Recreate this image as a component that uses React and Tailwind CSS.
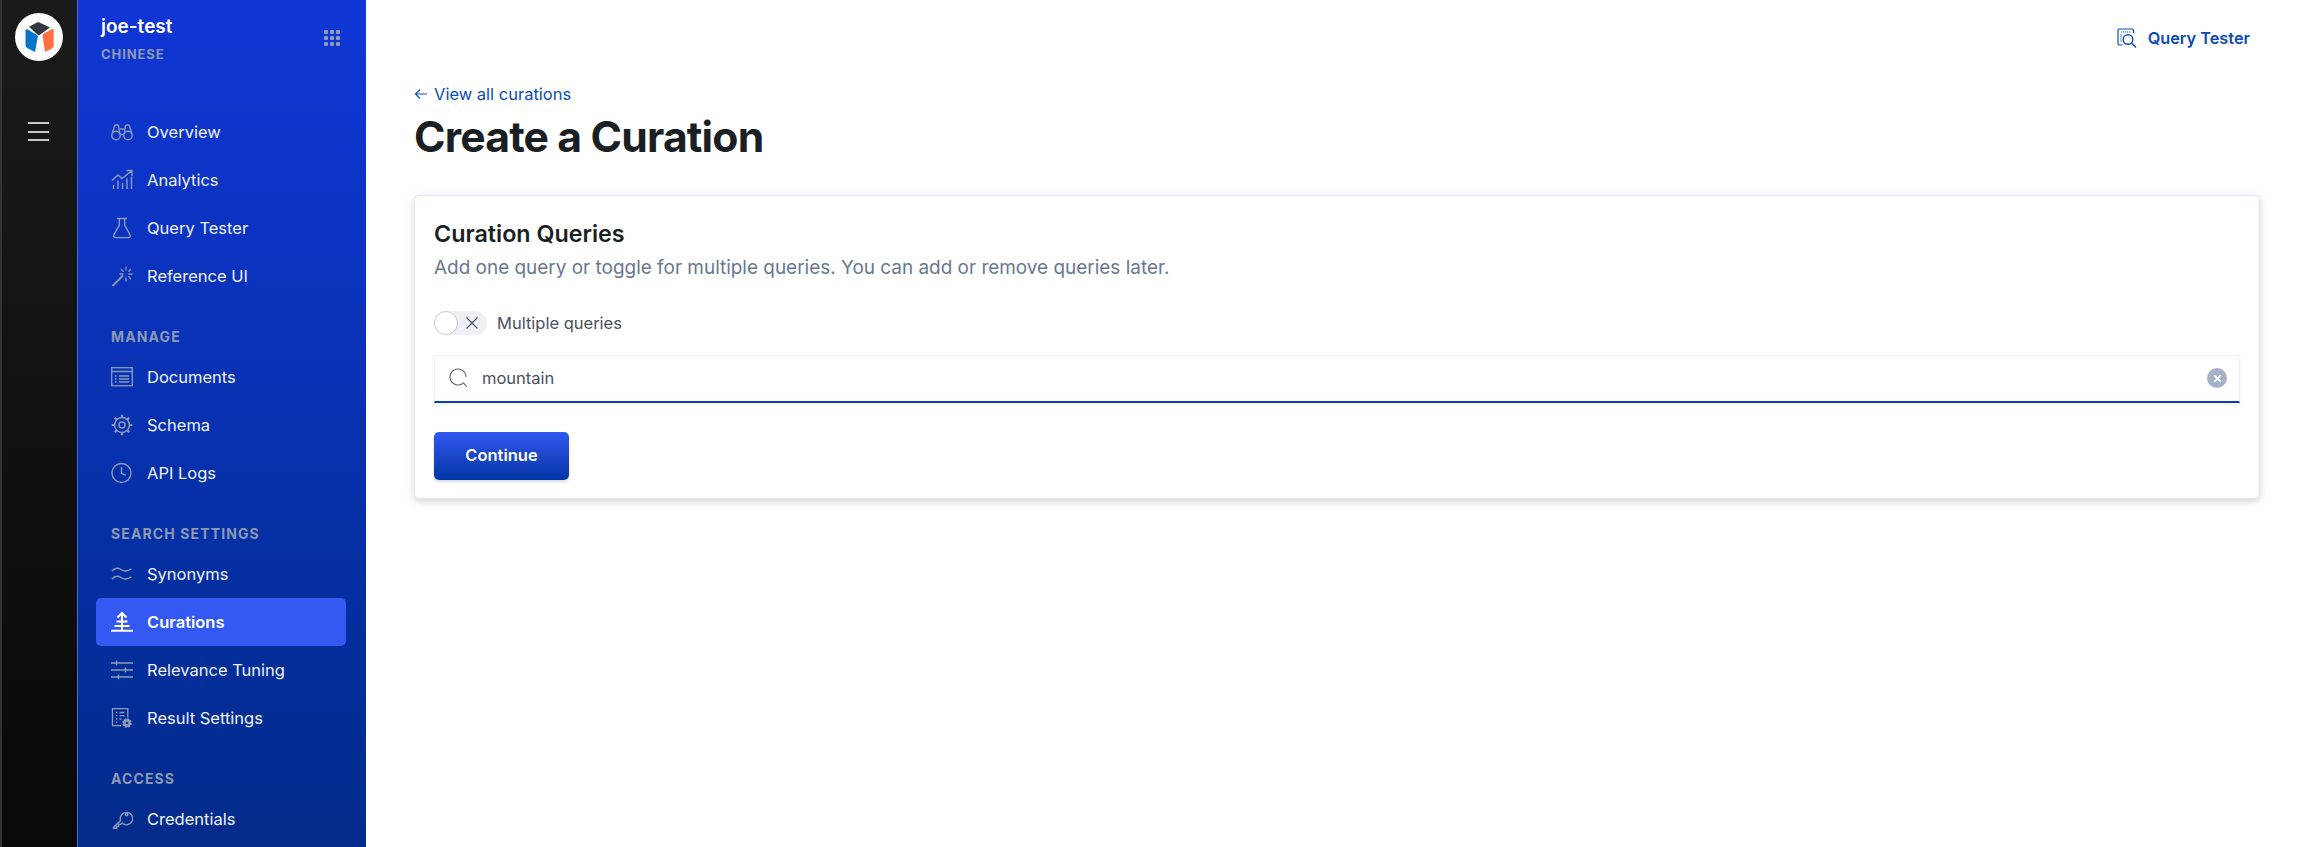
import React from "react";

const iconProps = {
  viewBox: "0 0 22 22",
  fill: "none",
  stroke: "currentColor",
  strokeWidth: 1.2,
  className: "w-[22px] h-[22px]",
};

function Binoculars() {
  return (
    <svg {...iconProps} strokeWidth="1.4">
      <circle cx="5" cy="14.5" r="4.2" />
      <circle cx="17" cy="14.5" r="4.2" />
      <path d="M9.2 14c.8-.9 2.8-.9 3.6 0M1.2 12.5 3.5 5c.3-1.6 3.7-1.6 4 0l1.4 8M20.8 12.5 18.5 5c-.3-1.6-3.7-1.6-4 0l-1.4 8M9 8h4" />
    </svg>
  );
}

function AnalyticsIcon() {
  return (
    <svg {...iconProps} strokeWidth="1.4">
      <path d="M1 11.5 7 6l4 3.5L20.5 2M15.5 1.500h5.500V7M2.500 20v-4M7 20v-8.500M11.500 20v-6M16 20V9.500M20.500 20V7.500" />
    </svg>
  );
}

function Flask() {
  return (
    <svg {...iconProps} strokeWidth="1.4">
      <path d="M6 1.500h10M8.300 1.500v6.800L3 17.600c-.9 1.600 0 3 1.700 3h12.600c1.700 0 2.600-1.400 1.700-3l-5.300-9.300V1.500" />
    </svg>
  );
}

function Wand() {
  return (
    <svg {...iconProps} strokeWidth="1.300">
      <path d="M1.500 21 12 10.500" strokeWidth="1.800" />
      <path d="M15 1.500v4M15 12.500v4M8.500 9h4M17.500 9h4M10 4l2.600 2.600M20 4l-2.600 2.600M20 14l-2.600-2.600" />
    </svg>
  );
}

function DocumentsIcon() {
  return (
    <svg {...iconProps} strokeWidth="1.300">
      <rect x="0.700" y="1.700" width="20.600" height="18" />
      <path d="M.7 5.500h20.600M4 10h1.600M8 10h10M4 13h1.600M8 13h10M4 16h1.600M8 16h10" />
    </svg>
  );
}

function SchemaIcon() {
  return (
    <svg {...iconProps} strokeWidth="1.500">
      <circle cx="11" cy="11" r="7.400" />
      <circle cx="11" cy="11" r="3" />
      <path
        d="M11 .8v2.800M11 18.400v2.800M.8 11h2.800M18.400 11h2.800M3.800 3.800l2 2M16.200 16.200l2 2M18.200 3.800l-2 2M5.800 16.200l-2 2"
        strokeWidth="2.200"
      />
    </svg>
  );
}

function Clock() {
  return (
    <svg {...iconProps} strokeWidth="1.400">
      <circle cx="10.500" cy="11" r="9.500" />
      <path d="M10.500 5v6.300l4.300 2" />
    </svg>
  );
}

function Waves() {
  return (
    <svg {...iconProps} strokeWidth="1.400">
      <path d="M1 8c3-3.500 6-3.500 9-1.500s6 2.500 10.500-.8M1 16c3-3.500 6-3.500 9-1.500s6 2.500 10.500-.8" />
    </svg>
  );
}

function TreeIcon() {
  return (
    <svg {...iconProps} strokeWidth="2">
      <path d="M11 2v17M0 19.800h22M6.500 6.500 11 2l4.500 4.500M5.500 10.500h11M3.500 15h15" />
    </svg>
  );
}

function Sliders() {
  return (
    <svg {...iconProps} strokeWidth="1.300">
      <path d="M0 4h22M0 11h22M0 18h22" />
      <path d="M5.500 1.800v4.400M14.500 8.800v4.400M7.500 15.800v4.400" strokeWidth="1.500" />
    </svg>
  );
}

function ResultIcon() {
  return (
    <svg {...iconProps} strokeWidth="1.300">
      <path d="M10 18.700H1.500V1.700h15.300v9" />
      <path d="M5 5.500h1.300M8.500 5.500h5M5 8.700h1.300M8.500 8.700h5M5 12h1.300M8.500 12h2M5 15.200h1.300" />
      <circle cx="16" cy="16" r="3.900" fill="currentColor" strokeWidth="1.800" strokeDasharray="2 1" />
      <circle cx="16" cy="16" r="1.300" fill="#0a2f97" stroke="none" />
    </svg>
  );
}

function KeyIcon() {
  return (
    <svg {...iconProps} strokeWidth="1.400">
      <path d="M9.600 12.400 2.500 19.400v1h3.200v-2h2v-2h2l1.400-1.500a6.200 6.200 0 1 0-1.500-2.500Z" />
      <circle cx="15.600" cy="6.500" r="1.200" />
    </svg>
  );
}

function GridIcon() {
  const dots = [0, 6, 12];
  return (
    <svg viewBox="0 0 16 16" fill="#8c9ab6" className="w-4 h-4">
      {dots.map((y) =>
        dots.map((x) => <rect key={`${x}-${y}`} x={x} y={y} width="4" height="4" rx="0.800" />)
      )}
    </svg>
  );
}

function Logo() {
  // drawn on the 48px circle itself
  return (
    <svg viewBox="0 0 48 48" className="w-12 h-12">
      <path d="M22 9.500c.8-.5 1.600-.5 2.400 0L35 14.500 24.500 22c-.6.400-1 .4-1.500 0L14 13.700Z" fill="#343741" />
      <path d="M10.500 18c0-1.500 1-2.200 2.300-1.500L22 22c.8.500 1 1 .8 2L20 39l-7-3.500c-1.600-.8-2.500-2-2.500-3.800Z" fill="#0077cc" />
      <path d="M38.700 17.500c0-1.300-.8-1.800-2-1.200l-7.500 4c-1.200.700-1.700 1.800-1.500 3.200L30 39l6-3c1.800-.9 2.700-2 2.700-3.800Z" fill="#ff7044" />
    </svg>
  );
}

function NavItem({ icon: Icon, label, active }) {
  return (
    <a
      className={
        active
          ? "flex items-center h-12 ml-[18px] mr-[20px] px-[15px] gap-[14px] rounded-[5px] bg-[#3458f2] text-white font-semibold"
          : "flex items-center h-12 ml-[18px] mr-[20px] px-[15px] gap-[14px] text-[#eef2fb]"
      }
    >
      <span className={active ? "text-white" : "text-[#8c9ab6]"}>
        <Icon />
      </span>
      <span>{label}</span>
    </a>
  );
}

function SectionLabel({ children }) {
  return (
    <div className="mt-6 mb-[5px] h-6 px-[33px] flex items-center text-[14px] font-bold tracking-[0.08em] text-[#8c9ab6]">
      {children}
    </div>
  );
}

function Sidebar() {
  return (
    <aside className="w-[289px] shrink-0 h-full overflow-hidden border-l border-[#4a6be0] bg-gradient-to-b from-[#1036d6] to-[#022b8a]">
      <div className="flex justify-between pl-[23px] pr-[26px] pt-[15px] h-[108px]">
        <div>
          <div className="text-[19px] leading-6 font-semibold text-white">joe-test</div>
          <div className="mt-[5px] text-[13px] leading-5 font-bold tracking-[0.07em] text-[#8c9ab6]">CHINESE</div>
        </div>
        <div className="pt-[15px]">
          <GridIcon />
        </div>
      </div>
      <nav className="text-[16.500px]">
        <NavItem icon={Binoculars} label="Overview" />
        <NavItem icon={AnalyticsIcon} label="Analytics" />
        <NavItem icon={Flask} label="Query Tester" />
        <NavItem icon={Wand} label="Reference UI" />
        <SectionLabel>MANAGE</SectionLabel>
        <NavItem icon={DocumentsIcon} label="Documents" />
        <NavItem icon={SchemaIcon} label="Schema" />
        <NavItem icon={Clock} label="API Logs" />
        <SectionLabel>SEARCH SETTINGS</SectionLabel>
        <NavItem icon={Waves} label="Synonyms" />
        <NavItem icon={TreeIcon} label="Curations" active />
        <NavItem icon={Sliders} label="Relevance Tuning" />
        <NavItem icon={ResultIcon} label="Result Settings" />
        <SectionLabel>ACCESS</SectionLabel>
        <NavItem icon={KeyIcon} label="Credentials" />
      </nav>
    </aside>
  );
}

function Rail() {
  return (
    <div className="w-[77px] shrink-0 h-full flex flex-col items-center pt-[13px] pr-[2px] border-l-2 border-[#333] bg-gradient-to-b from-[#1a1a1a] to-[#090909]">
      <div className="w-12 h-12 rounded-full bg-white">
        <Logo />
      </div>
      <div className="mt-[61px] w-[21px] flex flex-col gap-[6.500px]">
        <span className="h-[2px] bg-[#c8c8c8]" />
        <span className="h-[2px] bg-[#c8c8c8]" />
        <span className="h-[2px] bg-[#c8c8c8]" />
      </div>
    </div>
  );
}

export default function App() {
  return (
    <div className="flex h-[847px] overflow-hidden bg-white text-[16.500px] font-['Inter',sans-serif]">
      <Rail />
      <Sidebar />
      <main className="flex-1 min-w-0 pl-[48px] pr-[44px]">
        <div className="flex justify-end items-center gap-[11px] pr-[10px] h-[76px]">
          <svg viewBox="0 0 20 20" fill="none" stroke="#0b4cb4" strokeWidth="1.200" className="w-5 h-5">
            <path d="M5.500 17H2.500C1.600 17 1 16.400 1 15.500V2.500C1 1.600 1.600 1 2.500 1H15C15.900 1 16.500 1.600 16.500 2.500V5" />
            <path d="M4 4h10M4 6.500v8" strokeDasharray="1 1" />
            <circle cx="11" cy="11.500" r="4.800" strokeWidth="1.400" />
            <path d="m15 15.500 4 4" strokeWidth="1.400" />
          </svg>
          <span className="text-[16.300px] font-semibold text-[#0b4cb4]">Query Tester</span>
        </div>
        <a className="mt-[6px] h-6 flex items-center gap-[6px] text-[#0b4cb4]">
          <svg viewBox="0 0 14 14" fill="none" stroke="currentColor" strokeWidth="1.200" className="w-[14px] h-[14px]">
            <path d="M13 7H1.500M6 2.500 1.500 7 6 11.500" />
          </svg>
          View all curations
        </a>
        <h1 className="mt-[4px] text-[42.700px] leading-[54px] font-bold tracking-[-0.02em] text-[#1a1f24]">Create a Curation</h1>
        <section className="mt-[31px] h-[304px] rounded-[5px] border border-[#e3e8f0] bg-white px-[19px] pt-[20px] shadow-[0_3px_6px_rgba(152,162,179,0.35),0_0_14px_rgba(152,162,179,0.12)]">
          <h2 className="text-[23.300px] leading-9 font-semibold text-[#1a1f24]">Curation Queries</h2>
          <p className="text-[18.950px] leading-8 text-[#69778f]">
            Add one query or toggle for multiple queries. You can add or remove queries later.
          </p>
          <div className="mt-[27px] flex items-center gap-[10px]">
            <div className="relative w-[53px] h-6 rounded-full bg-[#eef0f4]">
              <div className="absolute left-0 top-0 w-6 h-6 rounded-full bg-white border border-[#c6ccd6]" />
              <svg viewBox="0 0 14 14" fill="none" stroke="#4b5563" strokeWidth="1.100" className="absolute left-[31px] top-[5px] w-[14px] h-[14px]">
                <path d="m1.500 1.500 11 11M12.500 1.500l-11 11" />
              </svg>
            </div>
            <span className="text-[#4a515e]">Multiple queries</span>
          </div>
          <div className="mt-[19px] h-12 flex items-center border border-[#eff0f5] border-b-2 border-b-[#0b3ea8] pl-[14px] pr-[12px] shadow-[0_2px_3px_rgba(152,162,179,0.15)]">
            <svg viewBox="0 0 20 20" fill="none" stroke="#5a6475" strokeWidth="1.100" className="w-5 h-5 shrink-0">
              <path d="M14.660 14.660A8 8 0 1 1 17 9" />
              <path d="m14.500 15 3.500 4" />
            </svg>
            <span className="ml-[13px] flex-1 text-[#4a515e]">mountain</span>
            <span className="w-5 h-5 rounded-full bg-[#a5b2c5] flex items-center justify-center">
              <svg viewBox="0 0 10 10" fill="none" stroke="white" strokeWidth="2" className="w-[9px] h-[9px]">
                <path d="m1.500 1.500 7 7M8.500 1.500l-7 7" />
              </svg>
            </span>
          </div>
          <button className="mt-[29px] w-[135px] h-12 rounded-[5px] bg-gradient-to-b from-[#2f58ee] to-[#0236a6] text-white font-semibold shadow-[0_2px_3px_rgba(152,162,179,0.4)]">
            Continue
          </button>
        </section>
      </main>
    </div>
  );
}
